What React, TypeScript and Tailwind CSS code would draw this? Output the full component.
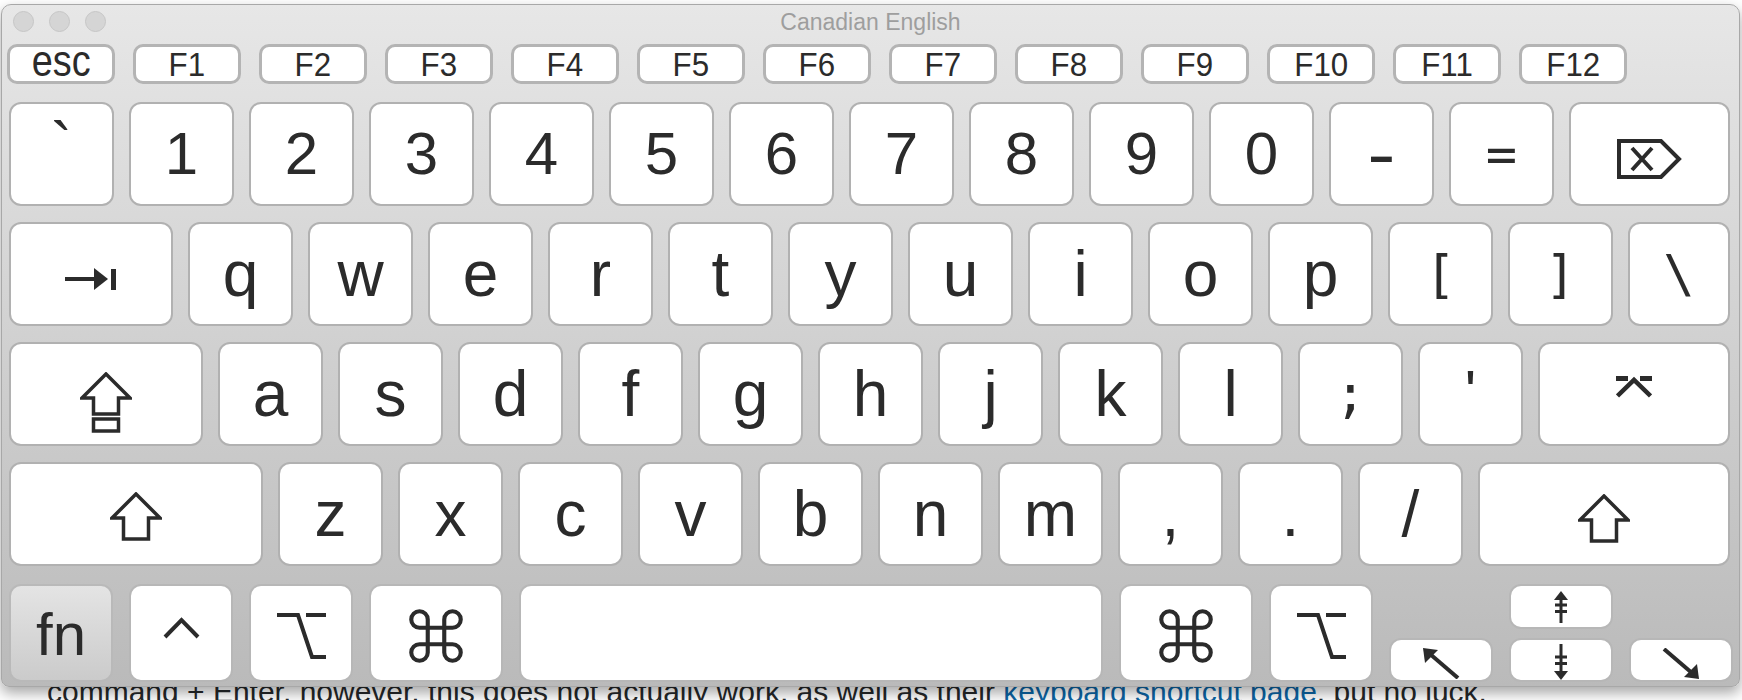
import React from "react";
import { Command } from "lucide-react";

type KP = { className?: string; children?: React.ReactNode };

function Key({ className = "", children }: KP) {
  return (
    <div
      className={`flex shrink-0 justify-center rounded-[12px] border-2 bg-white text-[#2b2b2b] ${className}`}
    >
      {children}
    </div>
  );
}

function Ch({ c }: { c: string }) {
  return <span className="text-[64px] leading-none">{c}</span>;
}
function Dg({ c }: { c: string }) {
  return <span className="text-[60px] leading-none">{c}</span>;
}
function Mono({ c }: { c: string }) {
  return (
    <span className="font-['DejaVu_Sans_Mono',monospace] text-[52px] leading-none">
      {c}
    </span>
  );
}

function FKey({ label, wide = false }: { label: string; wide?: boolean }) {
  return (
    <div className="flex h-[40px] w-[108px] shrink-0 items-center justify-center rounded-[10px] border-[3px] border-[#b4b4b4] bg-white text-[#2b2b2b]">
      {wide ? (
        <span className="inline-block -mt-[6px] scale-x-[0.86] text-[44px] leading-none">{label}</span>
      ) : (
        <span className="inline-block scale-x-[0.92] text-[34px] leading-none">{label}</span>
      )}
    </div>
  );
}

function ShiftIcon({ className = "" }: { className?: string }) {
  return (
    <svg width="52" height="49" viewBox="0 0 52 49" className={className}>
      <path
        d="M26 2 L50 26 L38.5 26 L38.5 47 L13.5 47 L13.5 26 L2 26 Z"
        fill="none"
        stroke="#2b2b2b"
        strokeWidth="3.5"
        strokeLinejoin="miter"
      />
    </svg>
  );
}

function CapsIcon() {
  return (
    <svg width="52" height="61" viewBox="0 0 52 61" className="mt-[17px]">
      <path
        d="M26 2 L50 26 L38.5 26 L38.5 42 L13.5 42 L13.5 26 L2 26 Z"
        fill="none"
        stroke="#2b2b2b"
        strokeWidth="3.5"
      />
      <rect x="13.5" y="47" width="25" height="12" fill="none" stroke="#2b2b2b" strokeWidth="3.5" />
    </svg>
  );
}

function TabIcon() {
  return (
    <svg width="52" height="24" viewBox="0 0 52 24" className="mt-[10px]">
      <line x1="0" y1="12" x2="32" y2="12" stroke="#2b2b2b" strokeWidth="4" />
      <polygon points="29,1 43,12 29,23" fill="#2b2b2b" />
      <rect x="46" y="2" width="5" height="21" fill="#2b2b2b" />
    </svg>
  );
}

function BackspaceIcon() {
  return (
    <svg width="66" height="40" viewBox="0 0 66 40" className="mt-[10px]">
      <path d="M2 2 H44 L62 20 L44 38 H2 Z" fill="none" stroke="#2b2b2b" strokeWidth="4" />
      <path d="M15 9 L35 31 M35 9 L15 31" stroke="#2b2b2b" strokeWidth="4" />
    </svg>
  );
}

function ReturnIcon() {
  return (
    <svg width="36" height="22" viewBox="0 0 36 22" className="mb-[15px]">
      <path d="M0 2.5 H12 M24 2.5 H36" stroke="#2b2b2b" strokeWidth="5" />
      <path d="M1.5 20 L18 4 L34.5 20" fill="none" stroke="#2b2b2b" strokeWidth="4.5" />
    </svg>
  );
}

function CtrlIcon() {
  return (
    <svg width="37" height="24" viewBox="0 0 37 24" className="mb-[10px]">
      <path d="M2 21 L18.5 4 L35 21" fill="none" stroke="#2b2b2b" strokeWidth="4" />
    </svg>
  );
}

function OptIcon() {
  return (
    <svg width="49" height="46" viewBox="0 0 49 46" className="mt-[5px]">
      <path d="M0 2 H21 L35 44 H49" fill="none" stroke="#2b2b2b" strokeWidth="4" />
      <path d="M29 2 H49" stroke="#2b2b2b" strokeWidth="4" />
    </svg>
  );
}

function CmdIcon() {
  return <Command size={66} strokeWidth={1.5} className="mt-[6px] text-[#2b2b2b]" />;
}

function HomeIcon() {
  return (
    <svg width="38" height="32" viewBox="0 0 38 32">
      <line x1="8" y1="7" x2="36" y2="31" stroke="#2b2b2b" strokeWidth="4" />
      <polygon points="1,1 16,3 3,16" fill="#2b2b2b" />
    </svg>
  );
}

function EndIcon() {
  return (
    <svg width="38" height="32" viewBox="0 0 38 32">
      <line x1="2" y1="1" x2="30" y2="25" stroke="#2b2b2b" strokeWidth="4" />
      <polygon points="37,31 22,29 35,16" fill="#2b2b2b" />
    </svg>
  );
}

function PgUpIcon() {
  return (
    <svg width="16" height="32" viewBox="0 0 16 32">
      <polygon points="8,0 15,9 1,9" fill="#2b2b2b" />
      <line x1="8" y1="8" x2="8" y2="32" stroke="#2b2b2b" strokeWidth="3" />
      <path d="M2 14 H14 M2 20.5 H14" stroke="#2b2b2b" strokeWidth="3" />
    </svg>
  );
}

function PgDnIcon() {
  return (
    <svg width="16" height="36" viewBox="0 0 16 36">
      <line x1="8" y1="0" x2="8" y2="28" stroke="#2b2b2b" strokeWidth="3" />
      <path d="M2 13 H14 M2 19.5 H14" stroke="#2b2b2b" strokeWidth="3" />
      <polygon points="8,36 15,27 1,27" fill="#2b2b2b" />
    </svg>
  );
}

const R = "h-full w-[105px] items-center border-[#b1b1b1]";
const B = "h-full items-center border-[#b7b7b7]";

export default function App() {
  const digits = ["1", "2", "3", "4", "5", "6", "7", "8", "9", "0"];
  const qrow = ["q", "w", "e", "r", "t", "y", "u", "i", "o", "p"];
  const arow = ["a", "s", "d", "f", "g", "h", "j", "k", "l"];
  const zrow = ["z", "x", "c", "v", "b", "n", "m"];
  const fkeys = ["F1", "F2", "F3", "F4", "F5", "F6", "F7", "F8", "F9", "F10", "F11", "F12"];

  return (
    <div className="relative h-[700px] w-[1742px] overflow-hidden bg-white font-['Liberation_Sans',Arial,sans-serif]">
      <p className="absolute left-[47px] top-[677px] whitespace-nowrap text-[30px] leading-none text-[#242729]">
        command + Enter, however, this does not actually work, as well as their{" "}
        <span className="text-[#0c65a5]">keyboard shortcut page</span>, but no luck.
      </p>

      <div className="absolute left-[1px] top-[4px] flex h-[683px] w-[1739px] flex-col rounded-t-[10px] rounded-b-[8px] border border-[#a8a8a8] bg-linear-to-b from-[#e7e7e7] to-[#bababa] shadow-[0_6px_14px_rgba(0,0,0,0.35)]">
        {/* title bar */}
        <div className="relative h-[39px] shrink-0">
          <div className="flex gap-[15px] pl-[11px] pt-[6px]">
            <div className="h-[21px] w-[21px] rounded-full border border-[#c6c6c6] bg-[#d5d5d5]" />
            <div className="h-[21px] w-[21px] rounded-full border border-[#c6c6c6] bg-[#d5d5d5]" />
            <div className="h-[21px] w-[21px] rounded-full border border-[#c6c6c6] bg-[#d5d5d5]" />
          </div>
          <div className="absolute inset-x-0 top-[6px] text-center text-[23px] leading-none text-[#9e9e9e]">
            Canadian English
          </div>
        </div>

        <div className="flex flex-col pl-[7px]">
          {/* F row */}
          <div className="-ml-[2px] flex h-[40px] gap-[18px]">
            <FKey label="esc" wide />
            {fkeys.map((f) => (
              <FKey key={f} label={f} />
            ))}
          </div>

          {/* number row */}
          <div className="mt-[18px] flex h-[104px] gap-[15px]">
            <Key className={R}>
              <span className="mb-[16px] text-[64px] leading-none">`</span>
            </Key>
            {digits.map((d) => (
              <Key key={d} className={R}>
                <Dg c={d} />
              </Key>
            ))}
            <Key className={R}>
              <span className="inline-block scale-x-[1.25] text-[68px] leading-none">-</span>
            </Key>
            <Key className={R}>
              <Mono c="=" />
            </Key>
            <Key className="h-full w-[161px] items-center border-[#b1b1b1]">
              <BackspaceIcon />
            </Key>
          </div>

          {/* q row */}
          <div className="mt-[16px] flex h-[104px] gap-[15px]">
            <Key className="h-full w-[164px] items-center border-[#b1b1b1]">
              <TabIcon />
            </Key>
            {qrow.map((c) => (
              <Key key={c} className={R}>
                <Ch c={c} />
              </Key>
            ))}
            <Key className={R}>
              <Mono c="[" />
            </Key>
            <Key className={R}>
              <Mono c="]" />
            </Key>
            <Key className="h-full w-[102px] items-center border-[#b1b1b1]">
              <Mono c="\" />
            </Key>
          </div>

          {/* a row */}
          <div className="mt-[16px] flex h-[104px] gap-[15px]">
            <Key className="h-full w-[194px] items-center border-[#b1b1b1]">
              <CapsIcon />
            </Key>
            {arow.map((c) => (
              <Key key={c} className={R}>
                <Ch c={c} />
              </Key>
            ))}
            <Key className={R}>
              <Mono c=";" />
            </Key>
            <Key className={R}>
              <span className="mb-[4px] text-[60px] leading-none">'</span>
            </Key>
            <Key className="h-full w-[192px] items-center border-[#b1b1b1]">
              <ReturnIcon />
            </Key>
          </div>

          {/* z row */}
          <div className="mt-[16px] flex h-[104px] gap-[15px]">
            <Key className="h-full w-[254px] items-center border-[#b1b1b1]">
              <ShiftIcon className="mt-[5px]" />
            </Key>
            {zrow.map((c) => (
              <Key key={c} className={R}>
                <Ch c={c} />
              </Key>
            ))}
            <Key className={R}>
              <Ch c="," />
            </Key>
            <Key className={R}>
              <Ch c="." />
            </Key>
            <Key className={R}>
              <Ch c="/" />
            </Key>
            <Key className="h-full w-[252px] items-center border-[#b1b1b1]">
              <ShiftIcon className="mt-[8px]" />
            </Key>
          </div>

          {/* bottom row */}
          <div className="mt-[18px] flex h-[98px] gap-[16px]">
            <div className="flex h-full w-[104px] shrink-0 items-center justify-center rounded-[12px] border-2 border-[#b9b9b9] bg-linear-to-b from-[#e4e4e4] to-[#cbcbcb] text-[#2b2b2b]">
              <span className="mt-[4px] text-[60px] leading-none">fn</span>
            </div>
            <Key className={`${B} w-[104px]`}>
              <CtrlIcon />
            </Key>
            <Key className={`${B} w-[104px]`}>
              <OptIcon />
            </Key>
            <Key className={`${B} w-[134px]`}>
              <CmdIcon />
            </Key>
            <Key className={`${B} w-[584px]`} />
            <Key className={`${B} w-[134px]`}>
              <CmdIcon />
            </Key>
            <Key className={`${B} w-[104px]`}>
              <OptIcon />
            </Key>
            <Key className="h-[44px] w-[104px] items-end self-end border-[#b7b7b7] pb-[1px]">
              <HomeIcon />
            </Key>
            <div className="flex h-full w-[104px] shrink-0 flex-col justify-between">
              <Key className="h-[45px] w-[104px] items-center border-[#b7b7b7]">
                <PgUpIcon />
              </Key>
              <Key className="h-[44px] w-[104px] items-end border-[#b7b7b7]">
                <PgDnIcon />
              </Key>
            </div>
            <Key className="h-[44px] w-[104px] items-end self-end border-[#b7b7b7]">
              <EndIcon />
            </Key>
          </div>
        </div>
      </div>
    </div>
  );
}
